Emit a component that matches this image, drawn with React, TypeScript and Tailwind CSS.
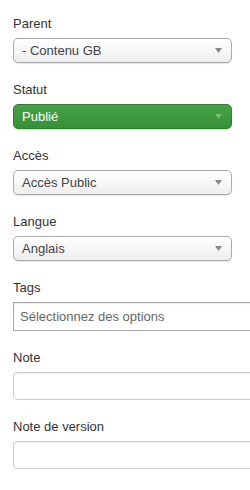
import type { ReactNode } from 'react'

function Arrow({ color }: { color: string }) {
  return (
    <svg width="7" height="5" viewBox="0 0 7 5" className="shrink-0">
      <path d="M0 0 L7 0 L3.5 5 Z" fill={color} />
    </svg>
  )
}

function Field({ label, children }: { label: string; children: ReactNode }) {
  return (
    <div className="flex flex-col">
      <label className="h-[18px] leading-[18px] text-[#333]">{label}</label>
      <div className="mt-[5px]">{children}</div>
    </div>
  )
}

function Select({ value }: { value: string }) {
  return (
    <div className="flex h-[25px] w-[219px] items-center justify-between rounded-[5px] border border-[#aaa] bg-gradient-to-b from-white to-[#eeeeee] pl-[8px] pr-[9px] text-[#444] shadow-[0_1px_1px_rgba(0,0,0,0.1)]">
      <span>{value}</span>
      <Arrow color="#888" />
    </div>
  )
}

export default function App() {
  return (
    <div className="h-[490px] w-[250px] overflow-hidden bg-white pl-[13px] pt-[15px] font-['Liberation_Sans',Arial,sans-serif] text-[13px]">
      <div className="flex flex-col gap-[18px]">
        <Field label="Parent">
          <Select value="- Contenu GB" />
        </Field>

        <Field label="Statut">
          <div className="flex h-[25px] w-[219px] items-center justify-between rounded-[5px] border border-[#2f7d2f] bg-gradient-to-b from-[#45a345] to-[#37903a] pl-[8px] pr-[9px] text-white shadow-[0_1px_1px_rgba(0,0,0,0.15)]">
            <span>Publié</span>
            <Arrow color="#7fb77f" />
          </div>
        </Field>

        <Field label="Accès">
          <Select value="Accès Public" />
        </Field>

        <Field label="Langue">
          <Select value="Anglais" />
        </Field>

        <Field label="Tags">
          <div className="flex h-[29px] w-[260px] items-center border border-[#aaa] bg-white pl-[6px] text-[#666] shadow-[inset_0_1px_2px_rgba(0,0,0,0.08)]">
            Sélectionnez des options
          </div>
        </Field>

        <Field label="Note">
          <div className="h-[28px] w-[260px] rounded-[4px] border border-[#ccc] bg-white shadow-[inset_0_1px_1px_rgba(0,0,0,0.075)]" />
        </Field>

        <Field label="Note de version">
          <div className="h-[28px] w-[260px] rounded-[4px] border border-[#ccc] bg-white shadow-[inset_0_1px_1px_rgba(0,0,0,0.075)]" />
        </Field>
      </div>
    </div>
  )
}
